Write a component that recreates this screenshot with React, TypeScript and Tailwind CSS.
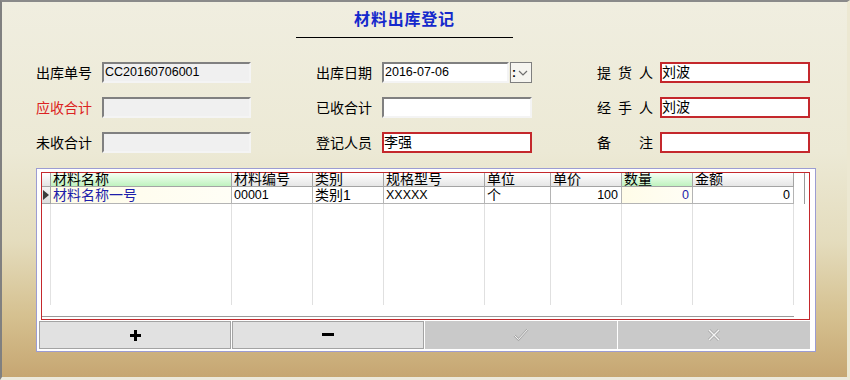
import React from "react";

interface Column {
  title: string;
  width: string;
  value: string;
  green?: boolean;
  right?: boolean;
  blue?: boolean;
  tint?: boolean;
}

const columns: Column[] = [
  { title: "材料名称", width: "w-[181px]", value: "材料名称一号", green: true, blue: true, tint: true },
  { title: "材料编号", width: "w-[81px]", value: "00001" },
  { title: "类别", width: "w-[71px]", value: "类别1" },
  { title: "规格型号", width: "w-[101px]", value: "XXXXX" },
  { title: "单位", width: "w-[66px]", value: "个" },
  { title: "单价", width: "w-[71px]", value: "100", right: true },
  { title: "数量", width: "w-[71px]", value: "0", green: true, right: true, blue: true, tint: true },
  { title: "金额", width: "w-[101px]", value: "0", right: true },
];

const sunken =
  "h-[21px] border-2 border-t-[#808080] border-l-[#808080] border-b-[#f4f4f4] border-r-[#f4f4f4] flex items-center overflow-hidden";
const redBox = "h-[21px] border-2 border-[#c4282c] bg-white flex items-center overflow-hidden";

function Label({ children, red = false, width }: { children: React.ReactNode; red?: boolean; width: string }) {
  return (
    <div className={`${width} shrink-0 text-[14px] leading-[16px] ${red ? "text-[#dc2222]" : "text-black"}`}>
      {children}
    </div>
  );
}

function SpacedLabel({ chars }: { chars: string[] }) {
  return (
    <div className="w-[63px] shrink-0">
      <div className="w-[56px] flex justify-between text-[14px] leading-[16px] text-black">
        {chars.map((c) => (
          <span key={c}>{c}</span>
        ))}
      </div>
    </div>
  );
}

export default function App() {
  return (
    <div className="w-[850px] h-[380px] overflow-hidden border-t-2 border-l-2 border-t-[#8a8a8a] border-l-[#808080] border-r-[3px] border-b-[3px] border-r-[#ece8d2] border-b-[#ece9dc] bg-[linear-gradient(180deg,#f0eee0_0%,#ece9d5_40%,#e4dcbd_64%,#d5c08f_84%,#c6a672_100%)] font-['Liberation_Sans','Noto_Sans_CJK_SC',sans-serif]">
      {/* Title */}
      <div className="ml-[294px] w-[217px] pt-[8px]">
        <div className="text-center text-[16px] leading-[20px] font-bold tracking-[0.8px] text-[#1428cc]">
          材料出库登记
        </div>
        <div className="mt-[7px] h-px bg-black" />
      </div>

      {/* Form */}
      <div className="mt-[24px] flex flex-col gap-[14px] pl-[34px]">
        <div className="flex items-center">
          <Label width="w-[66px]">出库单号</Label>
          <div className={`${sunken} w-[149px] bg-[#f0f0f0] pl-px text-[12.5px]`}>CC20160706001</div>
          <div className="w-[65px]" />
          <Label width="w-[66px]">出库日期</Label>
          <div className={`${sunken} w-[127px] bg-white pl-px text-[12.5px]`}>2016-07-06</div>
          <div className="ml-[1px] w-[22px] h-[21px] border border-[#7f7f7f] bg-[#f6f5f0] flex items-center">
            <span className="ml-[1px] text-[12px] leading-none font-bold">:</span>
            <svg width="10" height="6" viewBox="0 0 10 6" className="ml-[2px]">
              <path d="M1 1 L5 5 L9 1" fill="none" stroke="#6f6f6f" strokeWidth="1.2" />
            </svg>
          </div>
          <div className="w-[65px]" />
          <SpacedLabel chars={["提", "货", "人"]} />
          <div className={`${redBox} w-[150px] text-[14px]`}>刘波</div>
        </div>

        <div className="flex items-center">
          <Label width="w-[66px]" red>
            应收合计
          </Label>
          <div className={`${sunken} w-[149px] bg-[#f0f0f0]`} />
          <div className="w-[65px]" />
          <Label width="w-[66px]">已收合计</Label>
          <div className={`${sunken} w-[150px] bg-white`} />
          <div className="w-[65px]" />
          <SpacedLabel chars={["经", "手", "人"]} />
          <div className={`${redBox} w-[150px] text-[14px]`}>刘波</div>
        </div>

        <div className="flex items-center">
          <Label width="w-[66px]">未收合计</Label>
          <div className={`${sunken} w-[149px] bg-[#f0f0f0]`} />
          <div className="w-[65px]" />
          <Label width="w-[66px]">登记人员</Label>
          <div className={`${redBox} w-[150px] text-[14px]`}>李强</div>
          <div className="w-[65px]" />
          <SpacedLabel chars={["备", "注"]} />
          <div className={`${redBox} w-[150px]`} />
        </div>
      </div>

      {/* Grid panel */}
      <div className="ml-[34px] mt-[15px] w-[780px] h-[184px] border border-[#9c9cd2] bg-white">
        <div className="ml-[4px] mt-[3px] w-[769px] h-[148px] border border-[#c4282c] flex flex-col">
          <div className="flex">
            {/* row indicator column */}
            <div className="w-[9px] flex flex-col">
              <div className="h-[14px] border-b border-r border-[#a4a4a4] bg-linear-to-b from-white to-[#e4e4e4]" />
              <div className="h-[17px] border-b border-r border-[#a4a4a4] bg-linear-to-b from-[#f4f4f4] to-[#dedede] flex items-center">
                <svg width="6" height="10" viewBox="0 0 6 10" className="ml-px">
                  <path d="M0 0 L6 5 L0 10 Z" fill="#3c3c3c" />
                </svg>
              </div>
              <div className="h-[101px] border-r border-[#e2e2e2]" />
            </div>
            {columns.map((c) => (
              <div key={c.title} className={`${c.width} flex flex-col`}>
                <div
                  className={`h-[14px] border-b border-r border-[#a4a4a4] pl-[2px] text-[14px] leading-[13px] text-black whitespace-nowrap ${
                    c.green ? "bg-linear-to-b from-[#f4fff4] to-[#bff2bf]" : "bg-linear-to-b from-white to-[#e6e6e6]"
                  }`}
                >
                  {c.title}
                </div>
                <div
                  className={`h-[17px] border-b border-r border-[#b4b4b4] flex items-center whitespace-nowrap ${
                    c.right ? "justify-end pr-[3px]" : "pl-[2px]"
                  } ${c.tint ? "bg-linear-to-r from-[#fffce8] to-[#fffef6]" : "bg-white"} ${
                    c.blue ? "text-[#1e1eaa]" : "text-black"
                  } ${/^[\x00-\x7f]+$/.test(c.value) ? "text-[12.5px]" : "text-[14px]"}`}
                >
                  {c.value}
                </div>
                <div className="h-[101px] border-r border-[#e0e0e0]" />
              </div>
            ))}
            <div className="w-[14px]">
              <div className="ml-[10px] w-px h-[31px] bg-[#9a9a9a]" />
            </div>
          </div>
          <div className="mt-[11px] w-[752px] h-px bg-[#9a9a9a]" />
        </div>

        {/* Buttons */}
        <div className="ml-[2px] mt-[1px] h-[28px] flex gap-[1px]">
          <button className="w-[192px] shrink-0 border border-[#a3a3a3] bg-[#e1e1e1] flex items-center justify-center">
            <svg width="11" height="11" viewBox="0 0 11 11">
              <rect x="4" y="0" width="3" height="11" fill="#000" />
              <rect x="0" y="4" width="11" height="3" fill="#000" />
            </svg>
          </button>
          <button className="w-[192px] shrink-0 border border-[#a3a3a3] bg-[#e1e1e1] flex items-center justify-center">
            <svg width="12" height="4" viewBox="0 0 12 4">
              <rect x="0" y="0" width="12" height="3" fill="#000" />
            </svg>
          </button>
          <button className="w-[192px] shrink-0 bg-[#c9c9c9] flex items-center justify-center">
            <svg width="16" height="14" viewBox="0 0 16 14">
              <path d="M1.5 7.5 L5.5 11.5 L14.5 1.5" fill="none" stroke="#a8a8a8" strokeWidth="2.4" />
              <path d="M1.5 7.5 L5.5 11.5 L14.5 1.5" fill="none" stroke="#f4f4f4" strokeWidth="1" />
            </svg>
          </button>
          <button className="w-[192px] shrink-0 bg-[#c9c9c9] flex items-center justify-center">
            <svg width="14" height="14" viewBox="0 0 14 14">
              <path d="M2 2 L12 12 M12 2 L2 12" fill="none" stroke="#a8a8a8" strokeWidth="3" />
              <path d="M2 2 L12 12 M12 2 L2 12" fill="none" stroke="#f4f4f4" strokeWidth="1.4" />
            </svg>
          </button>
        </div>
      </div>
    </div>
  );
}
